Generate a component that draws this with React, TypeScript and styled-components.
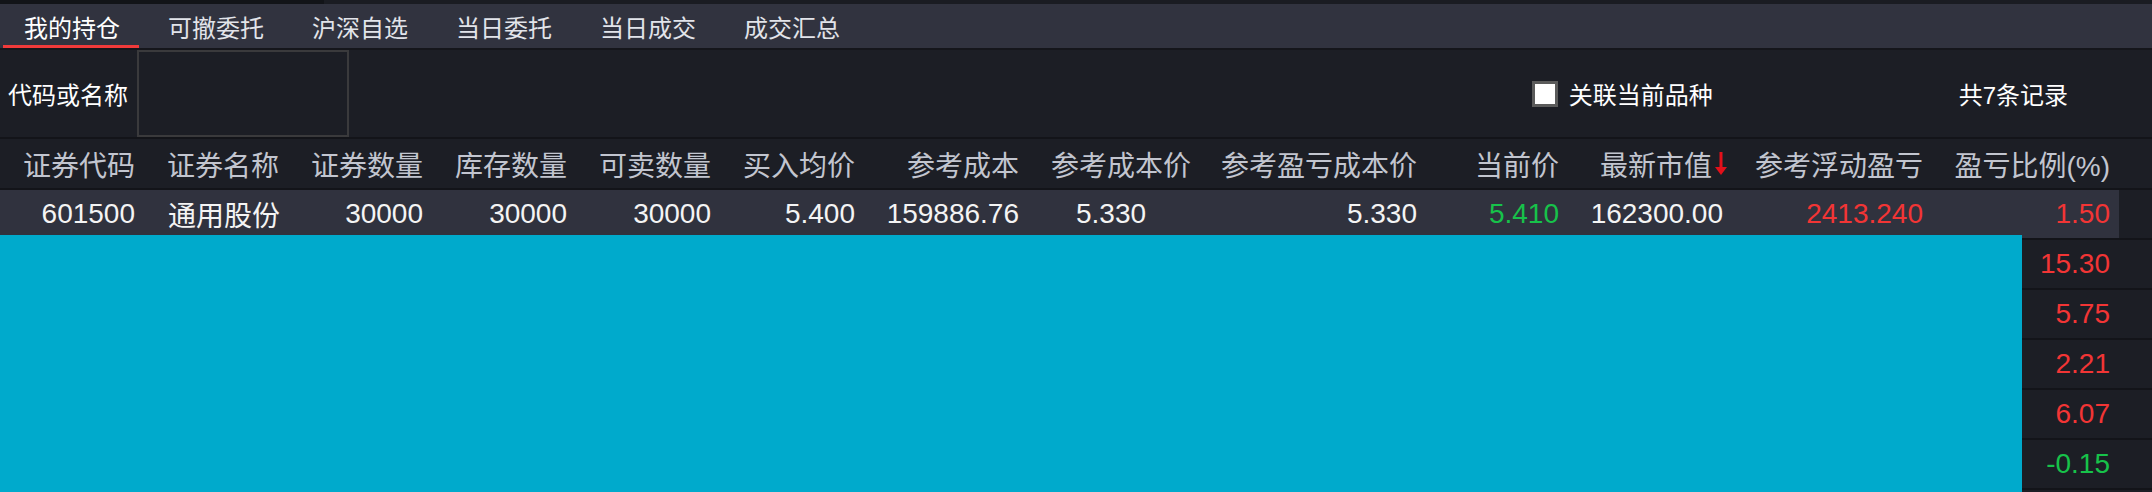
import React from 'react';
import styled, { createGlobalStyle, css } from 'styled-components';

const GlobalStyle = createGlobalStyle`
  html, body {
    margin: 0;
    padding: 0;
    background: #1c1e25;
  }
  body {
    font-family: "Liberation Sans", "Noto Sans CJK SC", sans-serif;
  }
`;

const Screen = styled.div`
  position: relative;
  width: 2152px;
  height: 492px;
  overflow: hidden;
  background: #1c1e25;
  display: flex;
  flex-direction: column;
`;

const TopStrip = styled.div`
  height: 4px;
  flex: none;
  display: flex;
  background: #1a1c22;
  &::before {
    content: '';
    width: 324px;
    background: #121418;
  }
`;

const TabBar = styled.div`
  height: 44px;
  flex: none;
  display: flex;
  background: #31333f;
  border-bottom: 2px solid #15161b;
`;

const Tab = styled.div<{ $active?: boolean }>`
  position: relative;
  width: 144px;
  display: flex;
  align-items: center;
  justify-content: center;
  font-size: 24px;
  color: ${props => props.$active ? '#ffffff' : '#e2e4ea'};
  ${props => props.$active && css`
    &::after {
      content: '';
      position: absolute;
      left: 3px;
      right: 5px;
      bottom: 0;
      height: 3px;
      background: #f03a3a;
    }
  `}
`;

const FilterBar = styled.div`
  height: 87px;
  flex: none;
  display: flex;
  align-items: center;
  padding: 0 84px 0 8px;
  border-bottom: 2px solid #131419;
  font-size: 24px;
  color: #ffffff;
`;

const SearchInput = styled.input`
  align-self: stretch;
  width: 212px;
  margin: 0 0 0 9px;
  box-sizing: border-box;
  background: transparent;
  border: 2px solid #3a3a3c;
  outline: none;
  color: #fff;
`;

const LinkOption = styled.label`
  margin-left: auto;
  display: flex;
  align-items: center;
  gap: 11px;
`;

const CheckBox = styled.span`
  width: 26px;
  height: 26px;
  box-sizing: border-box;
  border: 3px solid #5b5b5b;
  background: #ffffff;
`;

const RecordCount = styled.span`
  margin-left: 246px;
`;

const HeaderRow = styled.div`
  height: 49px;
  flex: none;
  display: flex;
  border-bottom: 2px solid #131419;
`;

const HeadCell = styled.div<{ $w: number; $padR: number }>`
  width: ${props => props.$w}px;
  flex: none;
  box-sizing: border-box;
  padding-right: ${props => props.$padR}px;
  display: flex;
  align-items: center;
  justify-content: flex-end;
  font-size: 28px;
  color: #c2c5cf;
  white-space: nowrap;
`;

const SortArrow = styled.svg`
  margin-left: 3px;
  flex: none;
`;

const Row = styled.div`
  height: 48px;
  flex: none;
  display: flex;
  border-bottom: 2px solid #131419;
`;

const RowCells = styled.div<{ $selected?: boolean }>`
  display: flex;
  background: ${props => props.$selected ? '#30323e' : 'transparent'};
`;

type Tone = 'up' | 'down' | 'plain';

const toneColor = (t: Tone) => (t === 'up' ? '#f23535' : t === 'down' ? '#17c24a' : '#f4f4f4');

const Cell = styled.div<{ $w: number; $align: 'left' | 'right'; $padL: number; $padR: number; $tone: Tone }>`
  width: ${props => props.$w}px;
  flex: none;
  box-sizing: border-box;
  padding-left: ${props => props.$padL}px;
  padding-right: ${props => props.$padR}px;
  display: flex;
  align-items: center;
  justify-content: ${props => props.$align === 'left' ? 'flex-start' : 'flex-end'};
  font-size: 28px;
  color: ${props => toneColor(props.$tone)};
  white-space: nowrap;
`;

const Mask = styled.div`
  position: absolute;
  left: 0;
  top: 235px;
  width: 2022px;
  bottom: 0;
  background: #00aacc;
`;

type Col = {
  key: string;
  title: string;
  width: number;
  padR?: number;
  dataAlign?: 'left' | 'right';
  dataPadL?: number;
  dataPadR?: number;
  sorted?: boolean;
};

const columns: Col[] = [
  { key: 'code', title: '证券代码', width: 150 },
  { key: 'name', title: '证券名称', width: 144, dataAlign: 'left', dataPadL: 18 },
  { key: 'qty', title: '证券数量', width: 144 },
  { key: 'stock', title: '库存数量', width: 144 },
  { key: 'sellable', title: '可卖数量', width: 144 },
  { key: 'avg', title: '买入均价', width: 144 },
  { key: 'cost', title: '参考成本', width: 164 },
  { key: 'costPrice', title: '参考成本价', width: 172, dataAlign: 'left', dataPadL: 42 },
  { key: 'plCost', title: '参考盈亏成本价', width: 226 },
  { key: 'price', title: '当前价', width: 142 },
  { key: 'mktValue', title: '最新市值', width: 168, sorted: true, dataPadR: 19 },
  { key: 'float', title: '参考浮动盈亏', width: 196 },
  { key: 'pct', title: '盈亏比例(%)', width: 181, padR: 9, dataPadR: 9 },
];

type Position = Record<string, string>;

const positions: Position[] = [
  {
    code: '601500', name: '通用股份', qty: '30000', stock: '30000', sellable: '30000',
    avg: '5.400', cost: '159886.76', costPrice: '5.330', plCost: '5.330', price: '5.410',
    mktValue: '162300.00', float: '2413.240', pct: '1.50',
  },
  { pct: '15.30' },
  { pct: '5.75' },
  { pct: '2.21' },
  { pct: '6.07' },
  { pct: '-0.15' },
];

const toneOf = (key: string, value: string): Tone => {
  if (key === 'price') return 'down';
  if (key === 'float' || key === 'pct') return value.startsWith('-') ? 'down' : 'up';
  return 'plain';
};

const tabs = ['我的持仓', '可撤委托', '沪深自选', '当日委托', '当日成交', '成交汇总'];

const App = () => {
  return (
    <Screen>
      <GlobalStyle />
      <TopStrip />
      <TabBar>
        {tabs.map((t, i) => (
          <Tab key={t} $active={i === 0}>{t}</Tab>
        ))}
      </TabBar>
      <FilterBar>
        <span>代码或名称</span>
        <SearchInput />
        <LinkOption>
          <CheckBox />
          <span>关联当前品种</span>
        </LinkOption>
        <RecordCount>共7条记录</RecordCount>
      </FilterBar>
      <HeaderRow>
        {columns.map(c => (
          <HeadCell key={c.key} $w={c.width} $padR={c.padR ?? 15}>
            {c.title}
            {c.sorted && (
              <SortArrow width="12" height="24" viewBox="0 0 12 24">
                <rect x="4.5" y="0" width="3" height="17" fill="#e3101a" />
                <polygon points="0,15 12,15 6,23" fill="#e3101a" />
              </SortArrow>
            )}
          </HeadCell>
        ))}
      </HeaderRow>
      {positions.map((p, i) => (
        <Row key={i}>
          <RowCells $selected={i === 0}>
            {columns.map(c => {
              const v = p[c.key] ?? '';
              return (
                <Cell
                  key={c.key}
                  $w={c.width}
                  $align={c.dataAlign ?? 'right'}
                  $padL={c.dataPadL ?? 0}
                  $padR={c.dataAlign === 'left' ? 0 : (c.dataPadR ?? 15)}
                  $tone={toneOf(c.key, v)}
                >
                  {v}
                </Cell>
              );
            })}
          </RowCells>
        </Row>
      ))}
      <Mask />
    </Screen>
  );
};

export default App;
